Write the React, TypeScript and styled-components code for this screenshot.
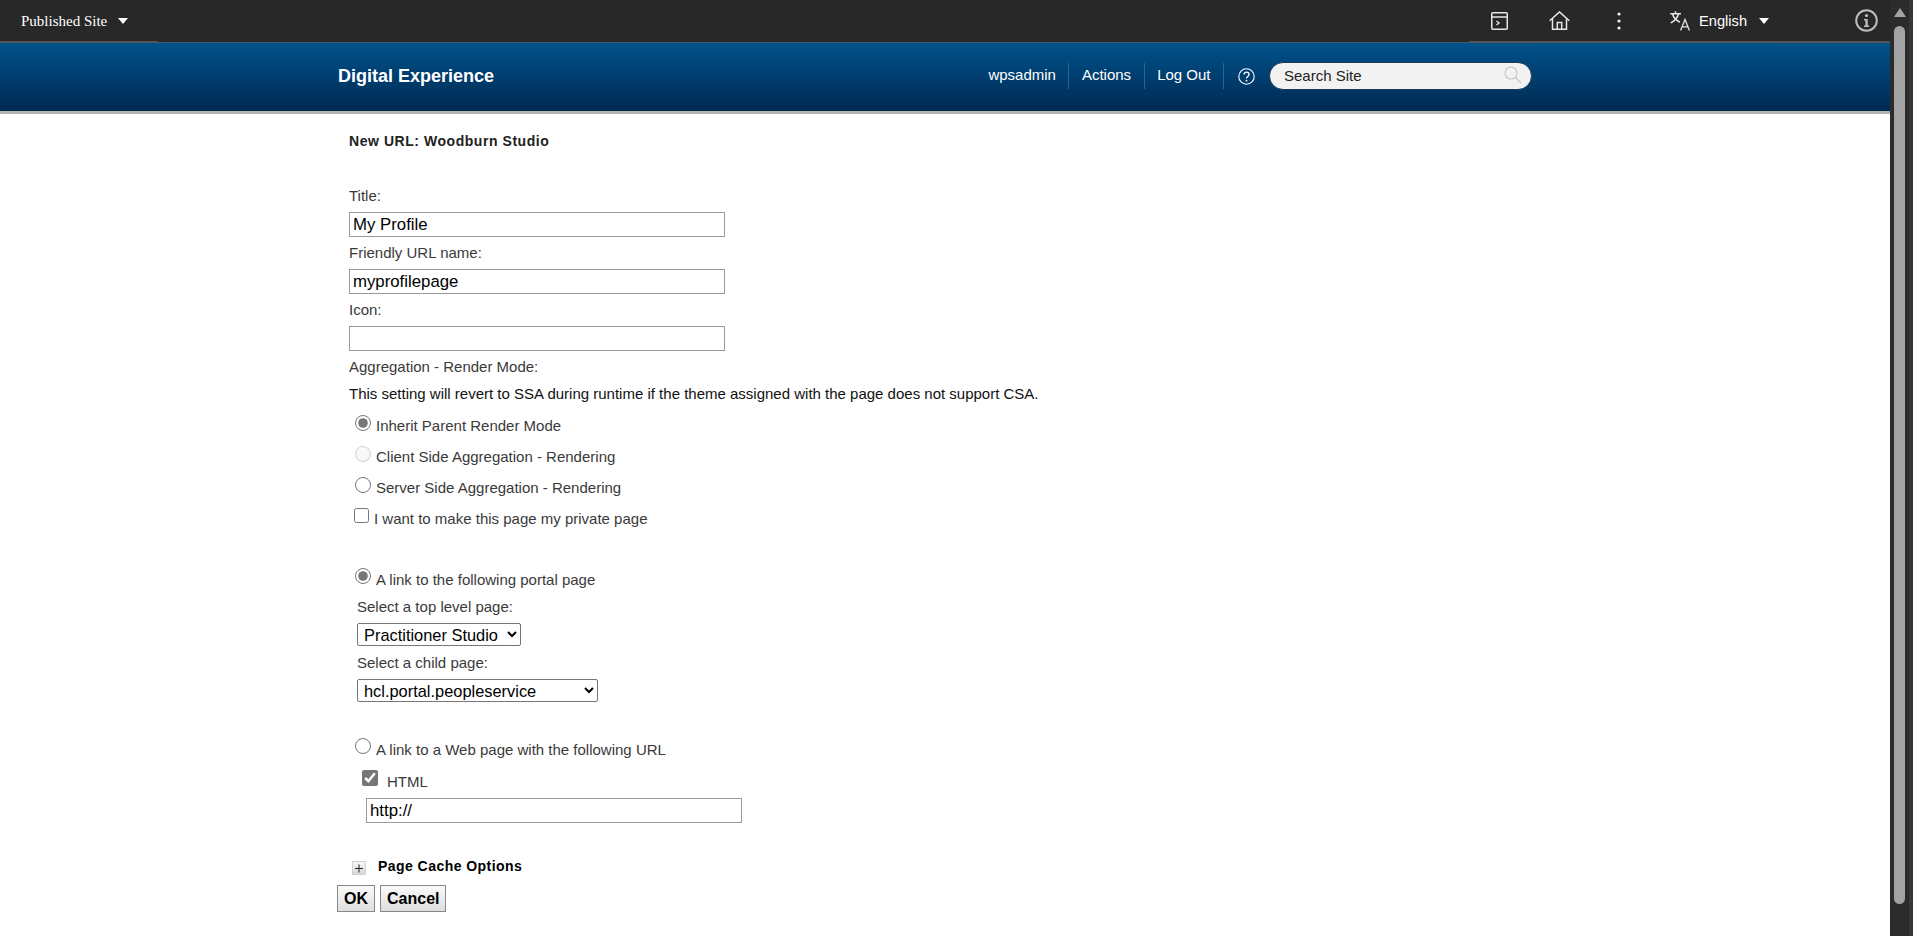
import React from 'react';
import styled, { createGlobalStyle } from 'styled-components';

const GlobalStyle = createGlobalStyle`
  html, body {
    margin: 0;
    padding: 0;
    height: 100%;
    overflow: hidden;
    background: #fff;
    font-family: "Liberation Sans", Arial, sans-serif;
  }
`;

const Page = styled.div`
  display: flex;
  width: 1913px;
  height: 936px;
  overflow: hidden;
`;

const Main = styled.div`
  width: 1890px;
  display: flex;
  flex-direction: column;
`;

const TopBar = styled.div`
  height: 42px;
  flex: none;
  background: #282828;
  border-bottom: 1px solid #3f5a76;
  display: flex;
  align-items: flex-start;
  color: #fff;
`;

const SiteMenu = styled.div`
  display: flex;
  align-items: center;
  height: 43px;
  width: 158px;
  box-sizing: border-box;
  padding: 1px 0 0 21px;
  border-bottom: 2px solid #555;
  font-family: "Liberation Serif", "Times New Roman", serif;
  font-size: 15px;
`;

const Caret = styled.span<{ $gap: number }>`
  margin-left: ${(p) => p.$gap}px;
  width: 0;
  height: 0;
  border-left: 5.5px solid transparent;
  border-right: 5.5px solid transparent;
  border-top: 6px solid #fff;
`;

const TopTools = styled.div`
  margin-left: auto;
  height: 43px;
  width: 421px;
  box-sizing: border-box;
  border-bottom: 2px solid #555;
  display: flex;
  align-items: center;
  padding-left: 22px;
`;

const ToolIcon = styled.svg<{ $after: number }>`
  display: block;
  flex: none;
  margin-right: ${(p) => p.$after}px;
  fill: none;
  stroke: #e6e6e6;
  stroke-width: 1.5;
`;

const Language = styled.span`
  font-size: 14.67px;
  margin-left: 9px;
`;

const InfoIcon = styled.svg`
  display: block;
  flex: none;
  margin-left: 86px;
  fill: none;
`;

const Header = styled.header`
  height: 71px;
  box-sizing: border-box;
  flex: none;
  background: linear-gradient(#00528c, #002a52);
  border-bottom: 3px solid #b3b3b3;
  display: flex;
  align-items: center;
  padding: 0 358px 2px 338px;
  color: #fff;
`;

const Logo = styled.div`
  font-size: 18px;
  font-weight: bold;
`;

const Nav = styled.nav`
  margin-left: auto;
  display: flex;
  align-items: center;
  font-size: 15px;
`;

const NavItem = styled.a`
  display: block;
  height: 26px;
  line-height: 24px;
  padding: 0 12.5px;
  border-right: 1px solid #2b6493;
`;

const HelpIcon = styled.svg`
  display: block;
  margin: 0 14px 0 14px;
`;

const Search = styled.div`
  width: 263px;
  height: 28px;
  box-sizing: border-box;
  border-radius: 14px;
  background: #f2f2f2;
  border: 1px solid #1d3a57;
  display: flex;
  align-items: center;
  justify-content: space-between;
  padding: 0 9px 2px 14px;
  color: #222;
  font-size: 15px;
`;

const Content = styled.main`
  padding: 19px 0 0 337px;
  color: #3a3a3a;
  font-size: 15px;
`;

const Form = styled.div`
  padding-left: 12px;
`;

const Heading = styled.h1`
  margin: 0 0 39px;
  font-size: 14px;
  line-height: 16px;
  font-weight: bold;
  letter-spacing: 0.55px;
  color: #222;
`;

const Label = styled.div`
  height: 16px;
  line-height: 16px;
  color: #3a3a3a;
  font-size: 15px;
`;

const TextInput = styled.input<{ $nested?: boolean }>`
  display: block;
  box-sizing: border-box;
  width: 376px;
  height: 25px;
  margin: ${(p) => (p.$nested ? '3px 0 0 17px' : '8px 0')};
  padding: 0 3px;
  border: 1px solid #999;
  border-radius: 0;
  outline: none;
  background: #fff;
  color: #000;
  font-family: "Liberation Sans", Arial, sans-serif;
  font-size: 16.8px;
`;

const Notice = styled.div`
  height: 30px;
  margin: 3px 0 2px;
  display: flex;
  align-items: center;
  color: #111;
`;

const Option = styled.label`
  display: flex;
  align-items: center;
  height: 31px;
  font-size: 15px;
`;

const LinkOption = styled(Option)<{ $height: number; $top: number }>`
  box-sizing: border-box;
  height: ${(p) => p.$height}px;
  padding-top: ${(p) => p.$top}px;
`;

const HtmlOption = styled(Option)`
  height: 28px;
  padding-left: 7px;
`;

const Radio = styled.input.attrs({ type: 'radio' })`
  accent-color: #767676;
  width: 16px;
  height: 16px;
  margin: -6px 5px 0 6px;
  flex: none;
`;

const Check = styled.input.attrs({ type: 'checkbox' })`
  accent-color: #767676;
  width: 15px;
  height: 15px;
  margin: -6px 5px 0 5px;
  flex: none;
`;

const HtmlCheck = styled(Check)`
  width: 16px;
  height: 16px;
  margin: -7px 9px 0 6px;
`;

const PageSelect = styled.div`
  padding: 5px 0 0 8px;
`;

const Choice = styled.select<{ $width: number }>`
  display: block;
  box-sizing: border-box;
  width: ${(p) => p.$width}px;
  height: 23px;
  margin: 8px 0 9px;
  padding-left: 2px;
  background: #fff;
  color: #000;
  border: 1px solid #767676;
  border-radius: 2px;
  font-family: "Liberation Sans", Arial, sans-serif;
  font-size: 16.4px;
`;

const Expander = styled.div`
  display: flex;
  align-items: center;
  height: 26px;
  margin-top: 30px;
  padding-left: 3px;
  color: #000;
  font-size: 14px;
  letter-spacing: 0.45px;
  font-weight: bold;
`;

const PlusBox = styled.svg`
  display: block;
  flex: none;
  margin: 3px 12px 0 0;
`;

const Buttons = styled.div`
  display: flex;
  gap: 5px;
  margin-top: 6px;
`;

const Button = styled.button`
  height: 27px;
  padding: 0 6px;
  border: 1px solid #888;
  background: linear-gradient(#fafafa, #dedede);
  color: #000;
  font-family: "Liberation Sans", Arial, sans-serif;
  font-size: 16px;
  font-weight: bold;
`;

const Track = styled.div`
  width: 23px;
  height: 936px;
  flex: none;
  box-sizing: border-box;
  background: #2b2b2b;
  border-right: 4px solid #373737;
  padding: 8px 4px 0;
`;

const ArrowUp = styled.div`
  width: 0;
  height: 0;
  margin: 0 auto 9px;
  border-left: 6.5px solid transparent;
  border-right: 6.5px solid transparent;
  border-bottom: 9px solid #a3a3a3;
`;

const Thumb = styled.div`
  height: 878px;
  border-radius: 6px;
  background: #a3a3a3;
`;

export default function App() {
  return (
    <Page>
      <GlobalStyle />
      <Main>
        <TopBar>
          <SiteMenu>
            Published Site
            <Caret $gap={11} />
          </SiteMenu>
          <TopTools>
            <ToolIcon $after={41} width="17" height="18" viewBox="0 0 17 18">
              <rect x="0.75" y="0.75" width="15.5" height="16.5" rx="1" />
              <path d="M1 5h15" />
              <path d="M5.5 9l2.500 2-2.500 2" strokeWidth="1.4" />
            </ToolIcon>
            <ToolIcon $after={47} width="21" height="19" viewBox="0 0 21 19">
              <path d="M0.7 9.800L10.500 0.900l9.800 8.900" />
              <path d="M3.500 7.500V18.200h14V7.500" />
              <path d="M8.300 18.200v-6.700h4.400v6.700" />
            </ToolIcon>
            <ToolIcon $after={49} width="4" height="18" viewBox="0 0 4 18">
              <circle cx="2" cy="2" r="1.600" fill="#f2f2f2" stroke="none" />
              <circle cx="2" cy="9" r="1.600" fill="#f2f2f2" stroke="none" />
              <circle cx="2" cy="16" r="1.600" fill="#f2f2f2" stroke="none" />
            </ToolIcon>
            <ToolIcon $after={0} width="20" height="20" viewBox="0 0 20 20" strokeWidth="1.1">
              <path d="M5.500 0.300v2.200M0.300 2.800h10.700M2.500 3c1 3.500 3.700 6.500 7.500 8.300M8.500 3c-1 3.800-3.700 6.700-7.700 8.800" />
              <path d="M10.600 19.500L15 8.500l4.400 11M12.100 15.800h5.800" strokeWidth="1.300" />
            </ToolIcon>
            <Language>English</Language>
            <Caret $gap={12} />
            <InfoIcon width="23" height="23" viewBox="0 0 23 23">
              <circle cx="11.500" cy="11.500" r="10.300" stroke="#bdbdbd" strokeWidth="2" />
              <circle cx="11.500" cy="6.500" r="1.600" fill="#bdbdbd" />
              <path d="M9 10h3.700v6.500h1.400V18H9v-1.500h1.400v-5H9z" fill="#bdbdbd" />
            </InfoIcon>
          </TopTools>
        </TopBar>
        <Header>
          <Logo>Digital Experience</Logo>
          <Nav>
            <NavItem>wpsadmin</NavItem>
            <NavItem>Actions</NavItem>
            <NavItem>Log Out</NavItem>
            <HelpIcon width="17" height="17" viewBox="0 0 17 17">
              <circle cx="8.500" cy="8.500" r="7.700" fill="none" stroke="#fff" strokeWidth="1.100" />
              <path d="M6 6.600c0-1.500 1.100-2.400 2.500-2.400s2.500.9 2.500 2.200c0 2-2.500 2-2.500 4" fill="none" stroke="#fff" strokeWidth="1.300" />
              <circle cx="8.500" cy="12.700" r="0.900" fill="#fff" />
            </HelpIcon>
            <Search>
              Search Site
              <svg width="18" height="18" viewBox="0 0 18 18" fill="none" stroke="#c8c8c8" strokeWidth="1.200">
                <circle cx="7" cy="7" r="6" />
                <path d="M11.500 11.500L17 17" />
              </svg>
            </Search>
          </Nav>
        </Header>
        <Content>
          <Form>
            <Heading>New URL: Woodburn Studio</Heading>
            <Label>Title:</Label>
            <TextInput defaultValue="My Profile" />
            <Label>Friendly URL name:</Label>
            <TextInput defaultValue="myprofilepage" />
            <Label>Icon:</Label>
            <TextInput />
            <Label>Aggregation - Render Mode:</Label>
            <Notice>This setting will revert to SSA during runtime if the theme assigned with the page does not support CSA.</Notice>
            <Option><Radio name="mode" defaultChecked />Inherit Parent Render Mode</Option>
            <Option><Radio name="mode" disabled />Client Side Aggregation - Rendering</Option>
            <Option><Radio name="mode" />Server Side Aggregation - Rendering</Option>
            <Option><Check />I want to make this page my private page</Option>
            <LinkOption $height={60} $top={30}><Radio name="link" defaultChecked />A link to the following portal page</LinkOption>
            <PageSelect>
              <Label>Select a top level page:</Label>
              <Choice $width={164} defaultValue="Practitioner Studio"><option>Practitioner Studio</option></Choice>
              <Label>Select a child page:</Label>
              <Choice $width={241} defaultValue="hcl.portal.peopleservice"><option>hcl.portal.peopleservice</option></Choice>
            </PageSelect>
            <LinkOption $height={56} $top={20}><Radio name="link" />A link to a Web page with the following URL</LinkOption>
            <HtmlOption><HtmlCheck defaultChecked />HTML</HtmlOption>
            <TextInput $nested defaultValue="http://" />
            <Expander>
              <PlusBox width="14" height="14" viewBox="0 0 14 14">
                <defs>
                  <linearGradient id="plusFill" x1="0" y1="0" x2="0" y2="1">
                    <stop offset="0" stopColor="#f8f8f8" />
                    <stop offset="1" stopColor="#d6d6d6" />
                  </linearGradient>
                </defs>
                <rect x="0.500" y="0.500" width="13" height="13" fill="url(#plusFill)" stroke="#d0d0d0" />
                <path d="M3 7.500h8M7 3.500v8" stroke="#222" strokeWidth="1" fill="none" />
              </PlusBox>
              Page Cache Options
            </Expander>
          </Form>
          <Buttons>
            <Button>OK</Button>
            <Button>Cancel</Button>
          </Buttons>
        </Content>
      </Main>
      <Track>
        <ArrowUp />
        <Thumb />
      </Track>
    </Page>
  );
}
